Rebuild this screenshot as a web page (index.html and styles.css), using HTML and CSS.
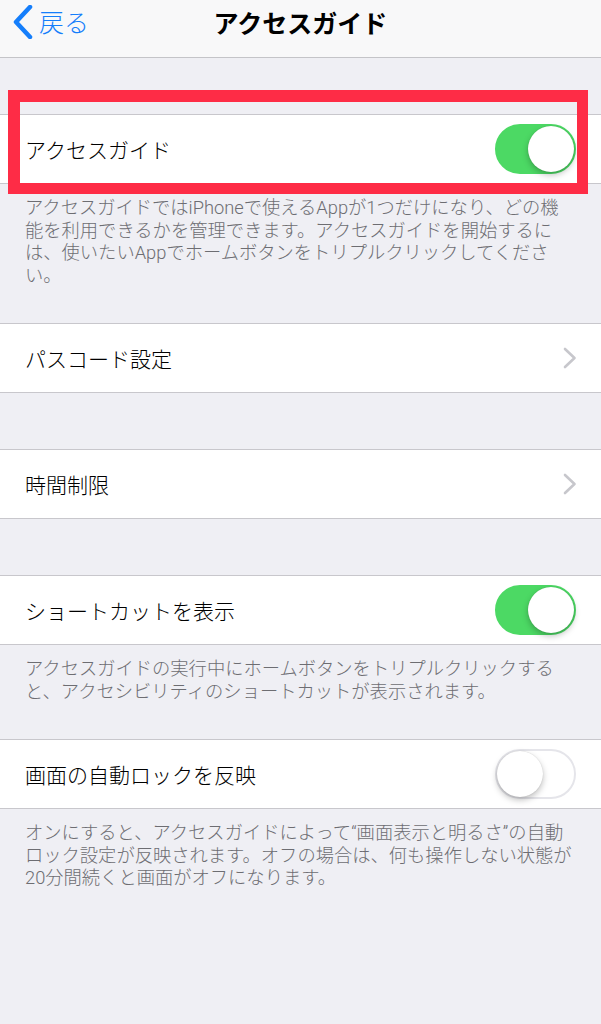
FILE: index.html
```html
<!DOCTYPE html>
<html>
<head>
  <meta charset="utf-8">
  <title>アクセスガイド</title>
  <link rel="stylesheet" href="styles.css">
</head>
<body>
  <nav class="navbar">
    <a class="back" href="#">
      <svg class="back-icon" width="20" height="34" viewBox="0 0 20 34">
        <path d="M17 2 L3 17 L17 32" fill="none" stroke="#157efb" stroke-width="4.5" stroke-linecap="round" stroke-linejoin="round"/>
      </svg>
      <span>戻る</span>
    </a>
    <h1 class="title">アクセスガイド</h1>
  </nav>

  <section class="group marked">
    <div class="cell">
      <span class="label">アクセスガイド</span>
      <span class="switch on"><span class="knob"></span></span>
    </div>
    <p class="note">アクセスガイドではiPhoneで使えるAppが1つだけになり、どの機<br>能を利用できるかを管理できます。アクセスガイドを開始するに<br>は、使いたいAppでホームボタンをトリプルクリックしてくださ<br>い。</p>
    <div class="highlight"></div>
  </section>

  <section class="group after-note">
    <div class="cell">
      <span class="label">パスコード設定</span>
      <svg class="chevron" width="14" height="22" viewBox="0 0 14 22">
        <path d="M2 2 L11.5 11 L2 20" fill="none" stroke="#c7c7cc" stroke-width="2.6" stroke-linecap="round" stroke-linejoin="round"/>
      </svg>
    </div>
  </section>

  <section class="group">
    <div class="cell">
      <span class="label">時間制限</span>
      <svg class="chevron" width="14" height="22" viewBox="0 0 14 22">
        <path d="M2 2 L11.5 11 L2 20" fill="none" stroke="#c7c7cc" stroke-width="2.6" stroke-linecap="round" stroke-linejoin="round"/>
      </svg>
    </div>
  </section>

  <section class="group">
    <div class="cell">
      <span class="label">ショートカットを表示</span>
      <span class="switch on"><span class="knob"></span></span>
    </div>
    <p class="note">アクセスガイドの実行中にホームボタンをトリプルクリックする<br>と、アクセシビリティのショートカットが表示されます。</p>
  </section>

  <section class="group after-note">
    <div class="cell">
      <span class="label">画面の自動ロックを反映</span>
      <span class="switch"><span class="knob"></span></span>
    </div>
    <p class="note">オンにすると、アクセスガイドによって“画面表示と明るさ”の自動<br>ロック設定が反映されます。オフの場合は、何も操作しない状態が<br>20分間続くと画面がオフになります。</p>
  </section>
</body>
</html>
```

FILE: styles.css
```css
body {
  margin: 0;
  background-color: #efeff4;
  font-family: "Noto Sans CJK JP", "Liberation Sans", sans-serif;
  color: #000;
}

.navbar {
  position: relative;
  height: 44px;
  padding-bottom: 13px;
  background-color: #f8f8f9;
  border-bottom: 1px solid #c4c4c8;
  display: flex;
  align-items: center;
  justify-content: center;
}

.back {
  position: absolute;
  left: 13px;
  top: 5px;
  display: flex;
  align-items: center;
  gap: 6px;
  color: #157efb;
  text-decoration: none;
  font-size: 25px;
  font-weight: 300;
}

.back span {
  margin-top: -3px;
}

.title {
  margin: 0;
  font-size: 25px;
  font-weight: bold;
}

.group {
  position: relative;
  margin-top: 56px;
}

.group.after-note {
  margin-top: 36px;
}

.cell {
  height: 68px;
  padding: 0 25px;
  background-color: #fff;
  border-top: 1px solid #c8c7cc;
  border-bottom: 1px solid #c8c7cc;
  display: flex;
  align-items: center;
  justify-content: space-between;
}

.label {
  font-size: 21px;
  font-weight: 300;
}

.chevron {
  margin-right: -1px;
}

.note {
  margin: 0;
  padding: 13px 25px 0;
  font-family: Roboto, "Noto Sans CJK JP", sans-serif;
  font-size: 18.3px;
  font-weight: 300;
  line-height: 22.5px;
  white-space: nowrap;
  color: #6d6d72;
}

.switch {
  position: relative;
  box-sizing: border-box;
  width: 81px;
  height: 50px;
  border-radius: 25px;
  background-color: #fff;
  border: 2px solid #e5e5ea;
}

.switch.on {
  background-color: #4cd964;
  border-color: #4cd964;
}

.knob {
  position: absolute;
  top: 0;
  left: 0;
  width: 46px;
  height: 46px;
  border-radius: 50%;
  background-color: #fff;
  box-shadow: 0 3px 6px rgba(0, 0, 0, 0.25), 0 0 1px rgba(0, 0, 0, 0.2);
}

.switch.on .knob {
  left: auto;
  right: 0;
}

.highlight {
  position: absolute;
  left: 8px;
  right: 13px;
  top: -24px;
  height: 81px;
  border: 12px solid #fe2c46;
  border-right-width: 11px;
  border-bottom-width: 11px;
}
```
